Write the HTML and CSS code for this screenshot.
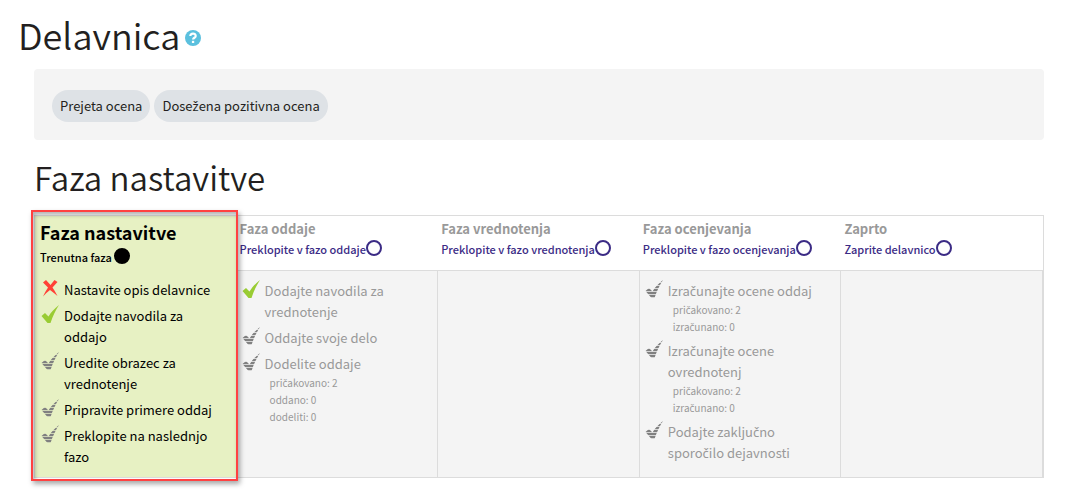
FILE: index.html
```html
<!DOCTYPE html>
<html lang="sl">
<head>
  <meta charset="UTF-8">
  <meta name="viewport" content="width=device-width, initial-scale=1.0">
  <title>Delavnica</title>
  <link rel="stylesheet" href="styles.css">
</head>
<body>
  <!-- shared icons -->
  <svg class="sprite" width="0" height="0" aria-hidden="true">
    <defs>
      <path id="tick" d="M0.500 11 L4 8 L7.500 11.500 C10 7 13.500 3.500 18 0 C14.500 5.500 12 10.500 9.500 18 L6.500 18 Z"/>
      <pattern id="stripes" width="18" height="3" patternUnits="userSpaceOnUse">
        <rect width="18" height="3" fill="#999" fill-opacity="0.35"/>
        <rect width="18" height="2" fill="#808080"/>
      </pattern>
      <symbol id="icon-done" viewBox="0 0 18 18"><use href="#tick" fill="#99cc33"/></symbol>
      <symbol id="icon-todo" viewBox="0 0 18 18"><use href="#tick" fill="url(#stripes)"/></symbol>
      <symbol id="icon-fail" viewBox="0 0 18 18">
        <path fill="#ff4136" d="M2 3.500 L5 1 L9.500 6 L13.500 1 L16.500 3 L11.500 8.500 Q14 12 16.500 17 Q13 14 9 11 Q5 14 2 17.500 Q4 13 7 8.500 Z"/>
      </symbol>
    </defs>
  </svg>

  <h1>Delavnica<a href="#" class="help" aria-label="Pomoč"><svg viewBox="0 0 16 16" width="16" height="16"><circle cx="8" cy="8" r="8" fill="#5bc0de"/><path d="M5.300 6 C5.500 2.800 10.700 2.800 10.700 5.900 C10.700 7.800 8.100 7.700 8.100 9.600" fill="none" stroke="#fff" stroke-width="2.200"/><rect x="6.900" y="10.800" width="2.300" height="2.200" fill="#fff"/></svg></a></h1>

  <main>
    <div class="completion">
      <span class="badge">Prejeta ocena</span>
      <span class="badge">Dose<span class="caron">ž</span>ena pozitivna ocena</span>
    </div>

    <h2>Faza nastavitve</h2>

    <div class="userplan">
      <section class="phase active">
        <header>
          <h3>Faza nastavitve</h3>
          <div class="switch">Trenutna faza <span class="dot"></span></div>
        </header>
        <ul class="tasks">
          <li><svg class="icon"><use href="#icon-fail"/></svg>Nastavite opis delavnice</li>
          <li><svg class="icon"><use href="#icon-done"/></svg>Dodajte navodila za oddajo</li>
          <li><svg class="icon"><use href="#icon-todo"/></svg>Uredite obrazec za vrednotenje</li>
          <li><svg class="icon"><use href="#icon-todo"/></svg>Pripravite primere oddaj</li>
          <li><svg class="icon"><use href="#icon-todo"/></svg>Preklopite na naslednjo fazo</li>
        </ul>
      </section>

      <section class="phase">
        <header>
          <h3>Faza oddaje</h3>
          <a href="#" class="switch">Preklopite v fazo oddaje<span class="ring"></span></a>
        </header>
        <ul class="tasks">
          <li><svg class="icon"><use href="#icon-done"/></svg>Dodajte navodila za vrednotenje</li>
          <li><svg class="icon"><use href="#icon-todo"/></svg>Oddajte svoje delo</li>
          <li><svg class="icon"><use href="#icon-todo"/></svg>Dodelite oddaje
            <div class="details">pri<span class="caron">č</span>akovano: 2<br>oddano: 0<br>dodeliti: 0</div>
          </li>
        </ul>
      </section>

      <section class="phase">
        <header>
          <h3>Faza vrednotenja</h3>
          <a href="#" class="switch">Preklopite v fazo vrednotenja<span class="ring"></span></a>
        </header>
        <ul class="tasks"></ul>
      </section>

      <section class="phase">
        <header>
          <h3>Faza ocenjevanja</h3>
          <a href="#" class="switch">Preklopite v fazo ocenjevanja<span class="ring"></span></a>
        </header>
        <ul class="tasks">
          <li><svg class="icon"><use href="#icon-todo"/></svg>Izra<span class="caron">č</span>unajte ocene oddaj
            <div class="details">pri<span class="caron">č</span>akovano: 2<br>izra<span class="caron">č</span>unano: 0</div>
          </li>
          <li><svg class="icon"><use href="#icon-todo"/></svg>Izra<span class="caron">č</span>unajte ocene ovrednotenj
            <div class="details">pri<span class="caron">č</span>akovano: 2<br>izra<span class="caron">č</span>unano: 0</div>
          </li>
          <li><svg class="icon"><use href="#icon-todo"/></svg>Podajte zaklju<span class="caron">č</span>no sporo<span class="caron">č</span>ilo dejavnosti</li>
        </ul>
      </section>

      <section class="phase">
        <header>
          <h3>Zaprto</h3>
          <a href="#" class="switch">Zaprite delavnico<span class="ring"></span></a>
        </header>
        <ul class="tasks"></ul>
      </section>
    </div>
  </main>
</body>
</html>
```
FILE: styles.css
```css
:root {
  --text: #231f20;
  --muted: #999;
  --link: #3b2b85;
  --panel: #f4f4f4;
  --line: #dcdcdc;
  --active: #e7f1c3;
  --red: #ff4141;
}

* {
  box-sizing: border-box;
}

body {
  margin: 0;
  padding: 10px 24px 16px 18px;
  background: #fff;
  color: var(--text);
  font-family: "Noto Sans CJK SC", "Noto Sans", sans-serif;
  font-size: 13px;
  line-height: 21px;
}

/* the CJK family has no precomposed č and ž */
.caron {
  font-family: "Noto Sans", sans-serif;
  line-height: 1;
}

.sprite {
  position: absolute;
}

h1, h2, h3, ul {
  margin: 0;
  padding: 0;
}

h1 {
  font-size: 36px;
  line-height: 48px;
  font-weight: 350;
}

.help svg {
  margin-left: 5px;
  vertical-align: 4px;
}

main {
  padding: 11px 0 0 16px;
}

.completion {
  display: flex;
  gap: 4px;
  padding: 21px 18px 18px;
  background: var(--panel);
  border-radius: 4px;
}

.badge {
  padding: 5px 8px 6px;
  background: #dee2e6;
  border-radius: 16px;
}

h2 {
  margin: 13px 0 14px;
  font-size: 33px;
  line-height: 48px;
  font-weight: 350;
}

.userplan {
  display: grid;
  grid-template-columns: repeat(5, 1fr);
  border: 1px solid var(--line);
}

.phase {
  display: flex;
  flex-direction: column;
  color: var(--muted);
}

.phase header {
  height: 55px;
  padding: 3px;
  border-bottom: 1px solid var(--line);
  white-space: nowrap;
}

h3 {
  font-size: 13px;
  line-height: 20px;
  font-weight: 700;
}

.switch {
  display: block;
  color: var(--link);
  font-size: 11px;
  line-height: 20px;
  font-weight: 500;
  text-decoration: none;
}

.dot,
.ring {
  display: inline-block;
  width: 16px;
  height: 16px;
  border: 2px solid currentColor;
  border-radius: 50%;
  vertical-align: -2px;
}

.dot {
  background: currentColor;
}

.tasks {
  flex: 1;
  padding: 9px 24px 5px 5px;
  border-right: 1px solid var(--line);
  background: var(--panel);
  list-style: none;
}

.tasks li {
  padding-left: 23px;
  margin-bottom: 5px;
}

.icon {
  float: left;
  width: 18px;
  height: 18px;
  margin-left: -23px;
}

.details {
  padding-left: 5px;
  font-size: 10px;
  line-height: 17px;
}

.active {
  position: relative;
  background: var(--active);
  color: #000;
}

/* frame around the current phase */
.active::after {
  content: "";
  position: absolute;
  inset: -6px -1px -4px -4px;
  border: 2px solid var(--red);
  box-shadow: 2px 3px 5px rgba(0, 0, 0, 0.35), inset 2px 3px 4px rgba(0, 0, 0, 0.3);
  pointer-events: none;
}

.active header {
  padding: 5px;
  height: 54px;
  border-bottom: 0;
}

.active h3 {
  font-size: 18px;
  line-height: 22px;
}

.active .switch {
  color: #000;
  line-height: 28px;
}

.active .tasks {
  padding-left: 6px;
  border-right: 0;
  background: none;
}
```
